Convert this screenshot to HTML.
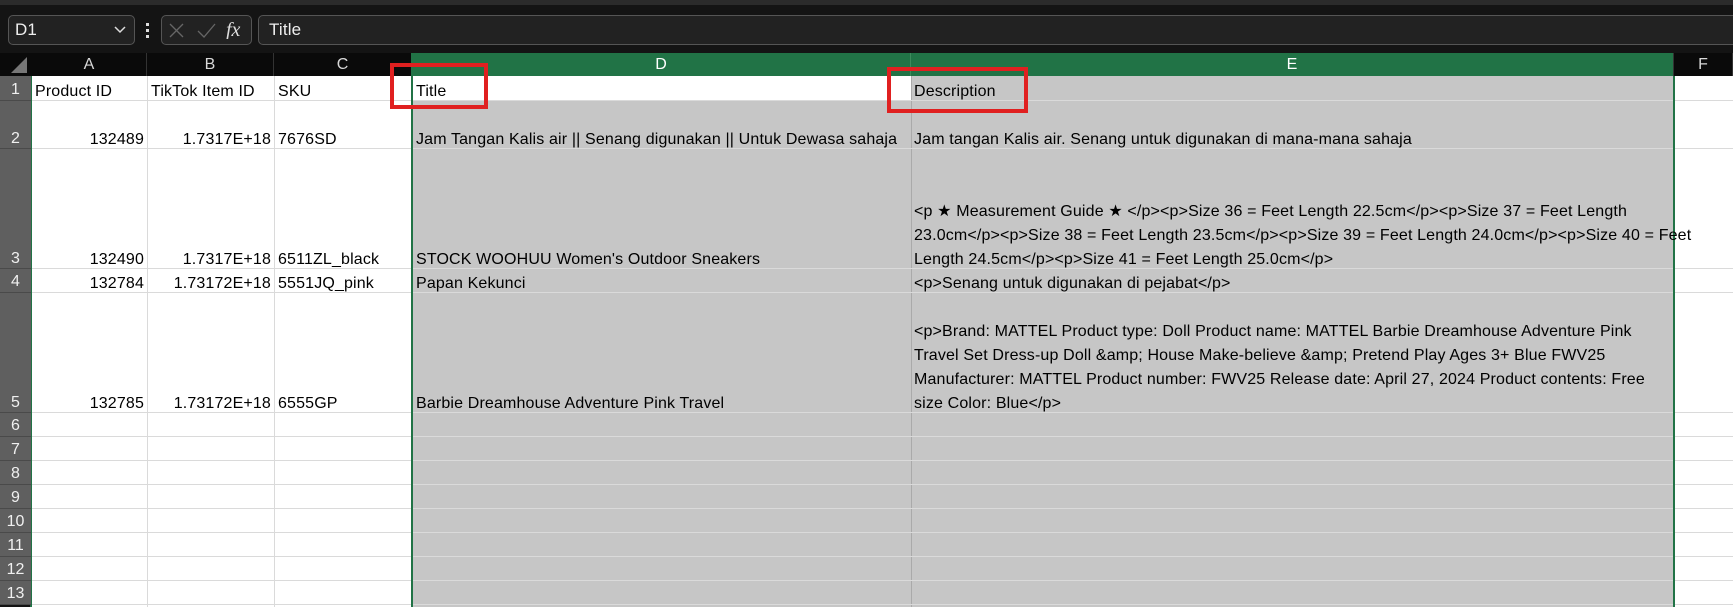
<!DOCTYPE html>
<html><head><meta charset="utf-8"><style>
*{margin:0;padding:0;box-sizing:border-box}
body{width:1733px;height:607px;overflow:hidden;background:#141414;font-family:"Liberation Sans",sans-serif;position:relative}
.a{position:absolute}
.t{position:absolute;font-size:16px;letter-spacing:0.15px;color:#000;white-space:nowrap;line-height:24px;margin-top:3px}
.r{text-align:right}
.hl{position:absolute;height:1px;background:#dadada}
.vl{position:absolute;width:1px;background:#dadada}
.rn{position:absolute;left:0;width:31px;color:#f0f0f0;font-size:16px;text-align:center;background:#5f5f5f;border-bottom:1px solid #4a4a4a}
.ch{position:absolute;top:53px;height:23px;color:#d8d8d8;font-size:16px;text-align:center;line-height:23px;border-right:1px solid #333}
</style></head><body>
<div class="a" style="left:0;top:0;width:1733px;height:5px;background:#2b2b2b"></div>
<div class="a" style="left:8px;top:15px;width:127px;height:30px;border:1px solid #555;border-radius:5px;background:#222"></div>
<div class="t" style="left:15px;top:15px;color:#eee;font-size:17px">D1</div>
<svg class="a" style="left:114px;top:26px" width="12" height="8"><path d="M1 1 L6 6 L11 1" stroke="#ddd" fill="none" stroke-width="1.5"/></svg>
<div class="a" style="left:146px;top:23px;width:3px;height:3px;background:#ddd"></div>
<div class="a" style="left:146px;top:29px;width:3px;height:3px;background:#ddd"></div>
<div class="a" style="left:146px;top:35px;width:3px;height:3px;background:#ddd"></div>
<div class="a" style="left:161px;top:15px;width:91px;height:30px;border:1px solid #555;border-radius:5px;background:#222"></div>
<svg class="a" style="left:168px;top:21px" width="80" height="18"><path d="M2 3 L15 16 M15 3 L2 16" stroke="#666" stroke-width="1.3"/><path d="M30 10 L36 16 L47 3" stroke="#666" fill="none" stroke-width="1.3"/><text x="58" y="15" font-family="Liberation Serif" font-style="italic" font-size="20" fill="#ddd">fx</text></svg>
<div class="a" style="left:258px;top:15px;width:1480px;height:30px;border:1px solid #555;border-radius:5px;background:#222"></div>
<div class="t" style="left:269px;top:15px;color:#eee;font-size:17px">Title</div>
<!-- headers -->
<div class="a" style="left:0;top:53px;width:1733px;height:23px;background:#0a0a0a"></div>
<svg class="a" style="left:10px;top:56px" width="18" height="18"><path d="M17 1 L17 17 L1 17 Z" fill="#777"/></svg>
<div class="ch" style="left:32px;width:115px">A</div>
<div class="ch" style="left:147px;width:127px">B</div>
<div class="ch" style="left:274px;width:138px">C</div>
<div class="ch" style="left:412px;width:499px;background:#217346;color:#fff;border-right:1px solid #3c8a5c">D</div>
<div class="ch" style="left:911px;width:763px;background:#217346;color:#fff">E</div>
<div class="ch" style="left:1674px;width:59px">F</div>
<!-- grid -->
<div class="a" style="left:31px;top:76px;width:1702px;height:531px;background:#fff"></div>
<div class="a" style="left:412px;top:101px;width:499px;height:506px;background:#c6c6c6"></div>
<div class="a" style="left:911px;top:76px;width:763px;height:531px;background:#c6c6c6"></div>
<div class="a" style="left:412px;top:76px;width:499px;height:25px;background:#fff"></div>
<div class="vl" style="left:147px;top:76px;height:531px"></div>
<div class="vl" style="left:274px;top:76px;height:531px"></div>
<div class="vl" style="left:911px;top:76px;height:531px;background:#aaa"></div>
<div class="hl" style="left:31px;top:100px;width:1702px"></div>
<div class="hl" style="left:31px;top:148px;width:1702px"></div>
<div class="hl" style="left:31px;top:268px;width:1702px"></div>
<div class="hl" style="left:31px;top:292px;width:1702px"></div>
<div class="hl" style="left:31px;top:412px;width:1702px"></div>
<div class="hl" style="left:31px;top:436px;width:1702px"></div>
<div class="hl" style="left:31px;top:460px;width:1702px"></div>
<div class="hl" style="left:31px;top:484px;width:1702px"></div>
<div class="hl" style="left:31px;top:508px;width:1702px"></div>
<div class="hl" style="left:31px;top:532px;width:1702px"></div>
<div class="hl" style="left:31px;top:556px;width:1702px"></div>
<div class="hl" style="left:31px;top:580px;width:1702px"></div>
<div class="hl" style="left:31px;top:604px;width:1702px"></div>
<div class="a" style="left:411px;top:53px;width:2px;height:554px;background:#217346"></div>
<div class="a" style="left:1673px;top:76px;width:2px;height:531px;background:#217346"></div>
<div class="a" style="left:30px;top:76px;width:2px;height:531px;background:#217346"></div>
<!-- row numbers -->
<div class="rn" style="top:76px;height:25px;line-height:28px">1</div>
<div class="rn" style="top:101px;height:48px;line-height:76px">2</div>
<div class="rn" style="top:149px;height:120px;line-height:220px">3</div>
<div class="rn" style="top:269px;height:24px;line-height:26px">4</div>
<div class="rn" style="top:293px;height:120px;line-height:220px">5</div>
<div class="rn" style="top:413px;height:24px;line-height:26px">6</div>
<div class="rn" style="top:437px;height:24px;line-height:26px">7</div>
<div class="rn" style="top:461px;height:24px;line-height:26px">8</div>
<div class="rn" style="top:485px;height:24px;line-height:26px">9</div>
<div class="rn" style="top:509px;height:24px;line-height:26px">10</div>
<div class="rn" style="top:533px;height:24px;line-height:26px">11</div>
<div class="rn" style="top:557px;height:24px;line-height:26px">12</div>
<div class="rn" style="top:581px;height:24px;line-height:26px">13</div>
<!-- text -->
<div class="t" style="left:35px;top:77px">Product ID</div>
<div class="t" style="left:151px;top:77px">TikTok Item ID</div>
<div class="t" style="left:278px;top:77px">SKU</div>
<div class="t" style="left:416px;top:77px">Title</div>
<div class="t" style="left:914px;top:77px">Description</div>

<div class="t r" style="left:32px;width:112px;top:125px">132489</div>
<div class="t r" style="left:147px;width:124px;top:125px">1.7317E+18</div>
<div class="t" style="left:278px;top:125px">7676SD</div>
<div class="t" style="left:416px;top:125px">Jam Tangan Kalis air || Senang digunakan || Untuk Dewasa sahaja</div>
<div class="t" style="left:914px;top:125px">Jam tangan Kalis air. Senang untuk digunakan di mana-mana sahaja</div>

<div class="t r" style="left:32px;width:112px;top:245px">132490</div>
<div class="t r" style="left:147px;width:124px;top:245px">1.7317E+18</div>
<div class="t" style="left:278px;top:245px">6511ZL_black</div>
<div class="t" style="left:416px;top:245px">STOCK WOOHUU Women's Outdoor Sneakers</div>
<div class="t" style="left:914px;top:197px">&lt;p ★ Measurement Guide ★ &lt;/p&gt;&lt;p&gt;Size 36 = Feet Length 22.5cm&lt;/p&gt;&lt;p&gt;Size 37 = Feet Length</div>
<div class="t" style="left:914px;top:221px">23.0cm&lt;/p&gt;&lt;p&gt;Size 38 = Feet Length 23.5cm&lt;/p&gt;&lt;p&gt;Size 39 = Feet Length 24.0cm&lt;/p&gt;&lt;p&gt;Size 40 = Feet</div>
<div class="t" style="left:914px;top:245px">Length 24.5cm&lt;/p&gt;&lt;p&gt;Size 41 = Feet Length 25.0cm&lt;/p&gt;</div>

<div class="t r" style="left:32px;width:112px;top:269px">132784</div>
<div class="t r" style="left:147px;width:124px;top:269px">1.73172E+18</div>
<div class="t" style="left:278px;top:269px">5551JQ_pink</div>
<div class="t" style="left:416px;top:269px">Papan Kekunci</div>
<div class="t" style="left:914px;top:269px">&lt;p&gt;Senang untuk digunakan di pejabat&lt;/p&gt;</div>

<div class="t r" style="left:32px;width:112px;top:389px">132785</div>
<div class="t r" style="left:147px;width:124px;top:389px">1.73172E+18</div>
<div class="t" style="left:278px;top:389px">6555GP</div>
<div class="t" style="left:416px;top:389px">Barbie Dreamhouse Adventure Pink Travel</div>
<div class="t" style="left:914px;top:317px">&lt;p&gt;Brand: MATTEL Product type: Doll Product name: MATTEL Barbie Dreamhouse Adventure Pink</div>
<div class="t" style="left:914px;top:341px">Travel Set Dress-up Doll &amp;amp; House Make-believe &amp;amp; Pretend Play Ages 3+ Blue FWV25</div>
<div class="t" style="left:914px;top:365px">Manufacturer: MATTEL Product number: FWV25 Release date: April 27, 2024 Product contents: Free</div>
<div class="t" style="left:914px;top:389px">size Color: Blue&lt;/p&gt;</div>
<!-- red boxes -->
<div class="a" style="left:390px;top:63px;width:98px;height:46px;border:4px solid #e02020"></div>
<div class="a" style="left:887px;top:67px;width:141px;height:46px;border:4px solid #e02020"></div>
</body></html>
